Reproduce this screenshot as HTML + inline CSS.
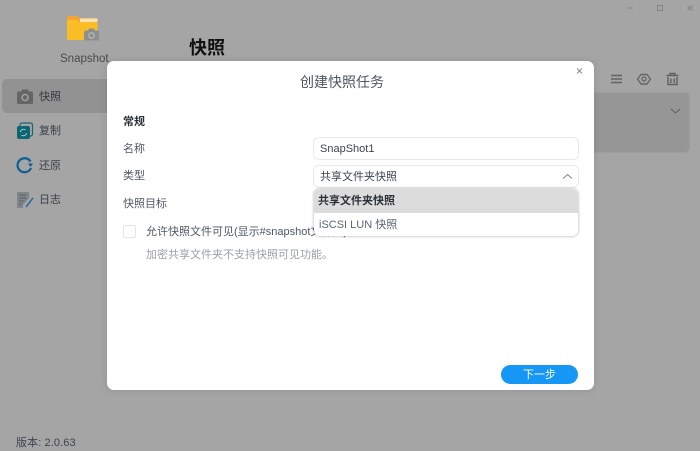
<!DOCTYPE html>
<html><head><meta charset="utf-8">
<style>
html,body{margin:0;padding:0}
body{width:700px;height:451px;overflow:hidden;position:relative;background:#a5a5a5;font-family:"Liberation Sans","Noto Sans CJK SC",sans-serif;font-size:11px;color:#3d4450}
.a{position:absolute;white-space:nowrap;line-height:16px}
svg{position:absolute;overflow:visible}
</style></head><body>

<!-- window controls -->
<svg style="left:0;top:0" width="700" height="20" fill="none" stroke="#858585">
<path d="M627 8H633"/><rect x="657.500" y="5.500" width="5" height="5"/><path d="M687.500 5.500L692.500 10.500M692.500 5.500L687.500 10.500"/>
</svg>

<!-- app icon -->
<svg style="left:66px;top:15px" width="34" height="26">
<path d="M1 3Q1 1 3 1H11L14 3H31V8H1Z" fill="#f2a531"/>
<rect x="14" y="3.500" width="17.500" height="3.500" fill="#f3e3b6"/>
<path d="M1 5H11L13 7H30Q31.500 7 31.500 8.500V23Q31.500 25 30 25H3Q1 25 1 23Z" fill="#f9be25"/>
<path d="M18 18Q18 15.500 20 15.500H22L23 13.500H28L29 15.500H31Q33 15.500 33 17V25Q33 25.500 32 25.500H19Q18 25.500 18 24.500Z" fill="#8e8e8e"/>
<circle cx="25.500" cy="20.500" r="2.800" fill="none" stroke="#b5b5b5" stroke-width="1.300"/>
</svg>
<div class="a" style="left:60px;top:51px;font-size:11.500px;color:#4a4a4a">Snapshot</div>
<div class="a" style="left:189px;top:37px;font-size:18px;line-height:22px;font-weight:bold;color:#111">快照</div>

<!-- sidebar -->
<div class="a" style="left:2px;top:79px;width:120px;height:34px;background:#929292;border-radius:5px"></div>
<svg style="left:16px;top:88px" width="18" height="17">
<path d="M1 5Q1 3.500 2.500 3.500H5L6 1.500H12L13 3.500H15.500Q17 3.500 17 5V14.500Q17 16 15.500 16H2.500Q1 16 1 14.500Z" fill="#656565"/>
<circle cx="9" cy="9.500" r="3" fill="none" stroke="#a3a3a3" stroke-width="1.500"/>
</svg>
<div class="a" style="left:39px;top:89px;color:#34393f">快照</div>
<svg style="left:16px;top:122px" width="18" height="18">
<rect x="4" y="1" width="12.500" height="13" rx="2" fill="none" stroke="#1a6470" stroke-width="1.200"/>
<rect x="1" y="4" width="13" height="13" rx="2" fill="#0e6672"/>
<path d="M4.500 10a3 3 0 0 1 5-2M10.500 11a3 3 0 0 1-5 2" fill="none" stroke="#9cc" stroke-width="1"/>
</svg>
<div class="a" style="left:39px;top:123px;color:#3b4149">复制</div>
<svg style="left:16px;top:156px" width="18" height="18">
<path d="M14.500 5.500A7 7 0 1 0 15 12" fill="none" stroke="#0d5f93" stroke-width="2.200"/>
<path d="M12 7.500H17L14.500 11Z" fill="#0d5f93"/>
</svg>
<div class="a" style="left:39px;top:158px;color:#3b4149">还原</div>
<svg style="left:16px;top:191px" width="18" height="18">
<path d="M1 1H13V7L7 14V17H1Z" fill="#7f858b"/>
<path d="M3 4H10M3 7H10M3 10H8M3 13H6" stroke="#5b6167"/>
<path d="M17 7L10 16" stroke="#2a6c9c" stroke-width="1.500"/>
</svg>
<div class="a" style="left:39px;top:192px;color:#3b4149">日志</div>

<div class="a" style="left:16px;top:435px;color:#3d4450;letter-spacing:.1px">版本: 2.0.63</div>

<!-- toolbar -->
<svg style="left:0;top:0" width="700" height="100" fill="none">
<path d="M611 75.500H622M611 79H622M611 82.500H622" stroke="#646464" stroke-width="1.500"/>
<path d="M641 74.500H647L650.500 79L647 84H641L637.500 79Z" stroke="#646464" stroke-width="1.400" stroke-linejoin="round"/>
<circle cx="644" cy="79" r="2" stroke="#646464" stroke-width="1.200"/>
<path d="M666.500 75.500H678.500M670 75V73.500H675V75M668 77V84.500H677V77M670.800 78.500V83M674.200 78.500V83" stroke="#606060" stroke-width="1.400"/>
</svg>
<div class="a" style="left:560px;top:93px;width:129px;height:59px;background:#969696;border-radius:4px;box-shadow:0 0 2px rgba(0,0,0,.12)"></div>
<svg style="left:0;top:0" width="700" height="130" fill="none"><path d="M671 109L675.500 113L680 109" stroke="#5e5e5e"/></svg>

<!-- modal -->
<div class="a" style="left:107px;top:61px;width:487px;height:329px;background:#fff;border-radius:7px;box-shadow:0 0 8px rgba(0,0,0,.12)"></div>
<div class="a" style="left:300px;top:73px;font-size:14px;line-height:18px;color:#4c5560">创建快照任务</div>
<svg style="left:0;top:0" width="700" height="100" fill="none"><path d="M577 68.500L582 73.500M582 68.500L577 73.500" stroke="#858a91"/></svg>

<div class="a" style="left:123px;top:114px;font-weight:bold;color:#2c3138">常规</div>
<div class="a" style="left:123px;top:141px;color:#4f5864">名称</div>
<div class="a" style="left:123px;top:168px;color:#4f5864">类型</div>
<div class="a" style="left:123px;top:196px;color:#4f5864">快照目标</div>

<div class="a" style="left:313px;top:137px;width:264px;height:21px;border:1px solid #e8eaed;border-radius:6px"></div>
<div class="a" style="left:320px;top:141px;color:#3d4450">SnapShot1</div>
<div class="a" style="left:313px;top:165px;width:264px;height:21px;border:1px solid #e8eaed;border-radius:6px"></div>
<div class="a" style="left:320px;top:169px;color:#3d4450">共享文件夹快照</div>
<svg style="left:0;top:160px" width="700" height="30" fill="none"><path d="M563 18.500L567.500 14.500L572 18.500" stroke="#7d848c"/></svg>

<div class="a" style="left:123px;top:225px;width:11px;height:11px;border:1px solid #e3e5e9;border-radius:2px"></div>
<div class="a" style="left:146px;top:224px;color:#4f5864">允许快照文件可见(显示#snapshot文件夹)</div>
<div class="a" style="left:146px;top:247px;color:#9aa0a8">加密共享文件夹不支持快照可见功能。</div>

<!-- dropdown -->
<div class="a" style="left:314px;top:189px;width:264px;height:47px;background:#fff;border-radius:6px;box-shadow:0 0 2px 1px rgba(0,0,0,.18);overflow:hidden">
<div style="height:24px;background:#dcdcdc"></div>
</div>
<div class="a" style="left:318px;top:193px;font-weight:bold;color:#2c3138">共享文件夹快照</div>
<div class="a" style="left:319px;top:217px;color:#5b6674">iSCSI LUN 快照</div>

<div class="a" style="left:501px;top:365px;width:77px;height:19px;line-height:21px;background:#1696f5;border-radius:10px;color:#fff;text-align:center">下一步</div>
</body></html>
